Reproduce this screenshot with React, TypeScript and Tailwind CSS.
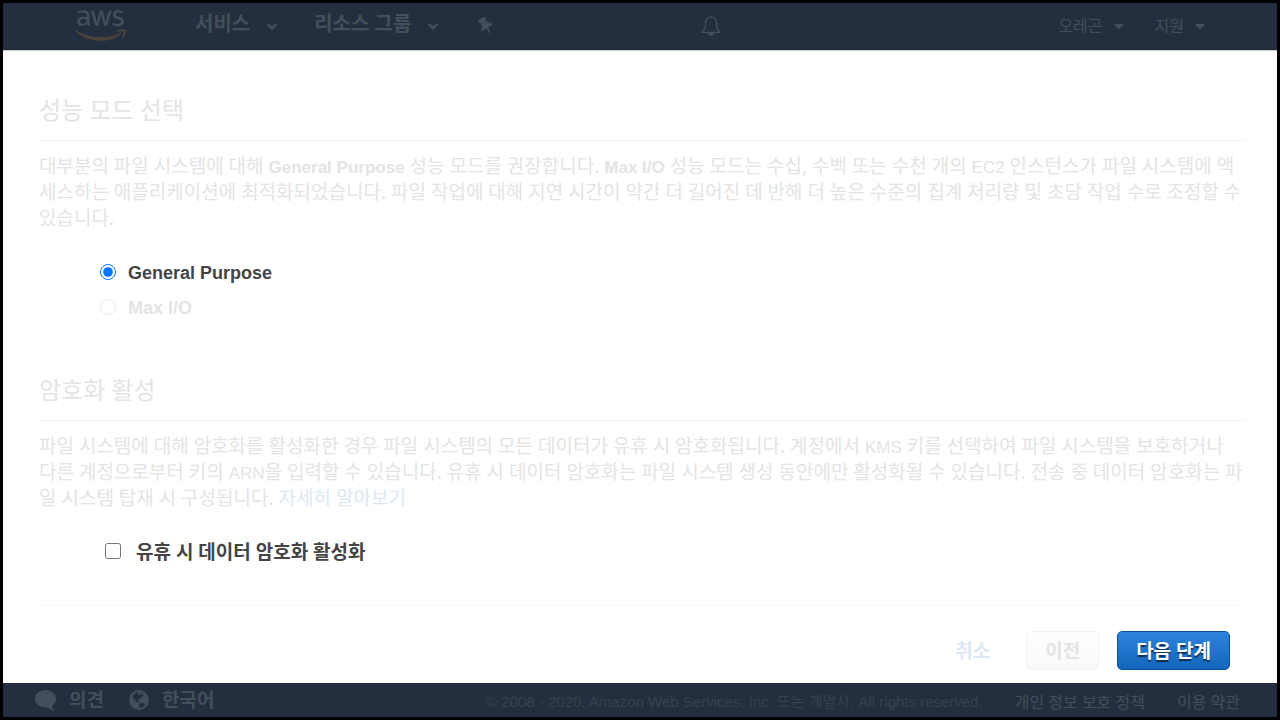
import type { ReactNode } from 'react'
import { FaAws, FaCaretDown } from 'react-icons/fa'

function Chevron() {
  return (
    <svg viewBox="0 0 12 8" className="mt-1.5 h-2 w-3" fill="currentColor" aria-hidden="true">
      <path d="M0 .8H2.600L6 3 9.400.8H12L6 7.600Z" />
    </svg>
  )
}

function Pin() {
  return (
    <svg viewBox="0 0 18 18" className="size-[18px]" fill="currentColor" aria-hidden="true">
      <g transform="rotate(-32 9 9)">
        <path d="M4.800 0h8.400v2.600h-1.200l.4 4.600c1.900.7 3 2.100 3 4.100h-5.200l-.8 6.700h-.8l-.8-6.700H2.600c0-2 1.100-3.400 3-4.100L6 2.600H4.800Z" />
      </g>
    </svg>
  )
}

function Bell() {
  return (
    <svg viewBox="0 0 20 22" className="h-[22px] w-5" fill="none" stroke="currentColor" strokeWidth="1.3" aria-hidden="true">
      <path d="M10 2.2c-3.400 0-5.400 2.400-5.400 5.600 0 5.600-1.200 7.600-3.800 9.600h18.400c-2.600-2-3.800-4-3.800-9.600 0-3.200-2-5.600-5.400-5.600Z" strokeLinejoin="round" />
      <path d="M9.300.4h1.400v1.800H9.300ZM7 18h6c0 1.700-1.300 2.600-3 2.600S7 19.700 7 18Z" fill="currentColor" stroke="none" />
    </svg>
  )
}

function Speech() {
  return (
    <svg viewBox="0 0 21 21" className="size-[21px]" fill="currentColor" aria-hidden="true">
      <path d="M10.500 0C16.300 0 21 3.900 21 8.800c0 2.900-1.500 5.300-4 6.900.2 2 1 3.500 2.600 4.900-3.200-.2-5.500-1.300-7.200-3.100-.6.100-1.200.1-1.900.1C4.700 17.600 0 13.700 0 8.800S4.700 0 10.500 0Z" />
    </svg>
  )
}

function Globe() {
  return (
    <svg viewBox="0 0 20 20" className="size-5" aria-hidden="true">
      <circle cx="10" cy="10" r="10" fill="currentColor" />
      <path
        d="M3.600 6.200 5.600 3.400 8.400 1.800 9.600 3 8.800 4.600 10.600 5.200 12.400 3.600 14.600 4.800 13 7.600 10.400 8.800 8.600 10.400 10.400 11.400 10.800 13 9 12.600 6.600 10.600 5 9.600 4.400 7.600Z"
        fill="#232f3e"
      />
      <path d="m9.600 14.600 2.400-1.600 3.200.4 1 1.400-1.800 2-3 1.200Z" fill="#232f3e" />
    </svg>
  )
}

function AwsLogo() {
  return (
    <a href="#" aria-label="AWS" className="block pb-0.5">
      <svg className="absolute h-0 w-0" aria-hidden="true">
        <linearGradient id="aws-fill" x1="0" y1="0" x2="0" y2="1">
          <stop offset="0.62" stopColor="#434e5b" />
          <stop offset="0.62" stopColor="#4a4238" />
        </linearGradient>
      </svg>
      <FaAws className="h-[41px] w-[51px]" fill="url(#aws-fill)" />
    </a>
  )
}

function Latin({ children }: { children: ReactNode }) {
  return <span className="font-['Liberation_Sans',sans-serif] text-[17px] leading-none">{children}</span>
}

function SectionTitle({ children }: { children: ReactNode }) {
  return (
    <h2 className="border-b border-[#f3f3f3] pb-3 text-[24px] leading-9 text-[#e4e4e4]">{children}</h2>
  )
}

export default function App() {
  return (
    <div className="flex min-h-screen flex-col border-[3px] border-black bg-white font-['Noto_Sans','Noto_Sans_CJK_KR',sans-serif] text-[19px] text-[#e4e4e4]">
      <header className="flex h-12 items-center border-b border-[#c8c8c8] bg-[#232f3e] pr-[69px] pl-[72px] text-[#434e5b]">
        <AwsLogo />
        <nav className="ml-[69px] flex items-center pb-0.5 text-[20px] font-bold">
          <button type="button" className="flex items-center gap-4 pb-1">
            서비스
            <Chevron />
          </button>
          <button type="button" className="ml-9 flex items-center gap-4 pb-1">
            리소스 그룹
            <Chevron />
          </button>
          <button type="button" aria-label="고정" className="ml-[38px]">
            <Pin />
          </button>
        </nav>
        <button type="button" aria-label="알림" className="ml-[206px] pb-0.5">
          <Bell />
        </button>
        <div className="ml-auto flex gap-7 pb-0.5 text-[16px] leading-5">
          <button type="button" className="flex items-center gap-2">
            오레곤
            <FaCaretDown className="size-4" />
          </button>
          <button type="button" className="flex items-center gap-2">
            지원
            <FaCaretDown className="size-4" />
          </button>
        </div>
      </header>

      <main className="flex-1 pt-[41px] pr-8 pl-9">
        <section>
          <SectionTitle>성능 모드 선택</SectionTitle>
          <p className="mt-3 leading-[26px]">
            대부분의 파일 시스템에 대해 <Latin><b>General Purpose</b></Latin> 성능 모드를 권장합니다.{' '}
            <Latin><b>Max I/O</b></Latin> 성능 모드는 수십, 수백 또는 수천 개의 <Latin>EC2</Latin> 인스턴스가 파일
            시스템에 액세스하는 애플리케이션에 최적화되었습니다. 파일 작업에 대해 지연 시간이 약간 더 길어진 데 반해 더
            높은 수준의 집계 처리량 및 초당 작업 수로 조정할 수 있습니다.
          </p>
          <div className="mt-[26px] ml-[61px] flex flex-col items-start gap-1.5 font-['Liberation_Sans',sans-serif] text-[18px] leading-[25px] font-bold">
            <label className="flex items-center gap-3 text-[#444]">
              <input type="radio" name="mode" defaultChecked className="size-4" />
              <span className="pt-1">General Purpose</span>
            </label>
            <label className="flex items-center gap-3">
              <input type="radio" name="mode" className="size-4 opacity-15" />
              <span className="pt-1">Max I/O</span>
            </label>
          </div>
        </section>

        <section className="mt-[51px]">
          <SectionTitle>암호화 활성</SectionTitle>
          <p className="mt-3 leading-[26px]">
            파일 시스템에 대해 암호화를 활성화한 경우 파일 시스템의 모든 데이터가 유휴 시 암호화됩니다. 계정에서{' '}
            <Latin>KMS</Latin> 키를 선택하여 파일 시스템을 보호하거나 다른 계정으로부터 키의 <Latin>ARN</Latin>을 입력할
            수 있습니다. 유휴 시 데이터 암호화는 파일 시스템 생성 동안에만 활성화될 수 있습니다. 전송 중 데이터 암호화는
            파일 시스템 탑재 시 구성됩니다.{' '}
            <a href="#" className="text-[#dde8f6]">자세히 알아보기</a>
          </p>
          <label className="mt-[25px] ml-[66px] flex w-fit items-center gap-[15px] leading-[26px] font-bold text-[#444]">
            <input type="checkbox" className="size-4" />
            <span className="pt-[3px]">유휴 시 데이터 암호화 활성화</span>
          </label>
        </section>

        <div className="mt-10 mr-1 flex items-center justify-end border-t border-[#f7f7f7] pt-[25px] pr-[11px] pb-3 leading-7 font-bold">
          <button type="button" className="mr-9 text-[#dde8f6]">취소</button>
          <button type="button" className="mr-[18px] h-[39px] rounded-[5px] border border-[#f3f3f3] bg-linear-to-b from-white to-[#f9f9f9] px-[18px]">
            이전
          </button>
          <button type="button" className="h-[39px] rounded-[5px] border border-[#0f519f] bg-linear-to-b from-[#2e85de] to-[#1166bb] px-[18px] text-white text-shadow-[0_2px_1px_rgb(0_0_0/0.6)]">
            다음 단계
          </button>
        </div>
      </main>

      <footer className="flex h-[34px] items-center bg-[#232f3e] pr-[37px] pl-8 leading-7 text-[#434e5b]">
        <button type="button" className="flex items-center gap-[13px] font-bold">
          <Speech />
          의견
        </button>
        <button type="button" className="ml-[25px] flex items-center gap-[13px] font-bold">
          <Globe />
          한국어
        </button>
        <p className="mt-1 ml-auto font-['Liberation_Sans','Noto_Sans_CJK_KR',sans-serif] text-[15px] text-[#36424f]">
          © 2008 - 2020, Amazon Web Services, Inc. 또는 계열사. All rights reserved.
        </p>
        <a href="#" className="mt-1 ml-8 text-[16px]">개인 정보 보호 정책</a>
        <a href="#" className="mt-1 ml-8 text-[16px]">이용 약관</a>
      </footer>
    </div>
  )
}
